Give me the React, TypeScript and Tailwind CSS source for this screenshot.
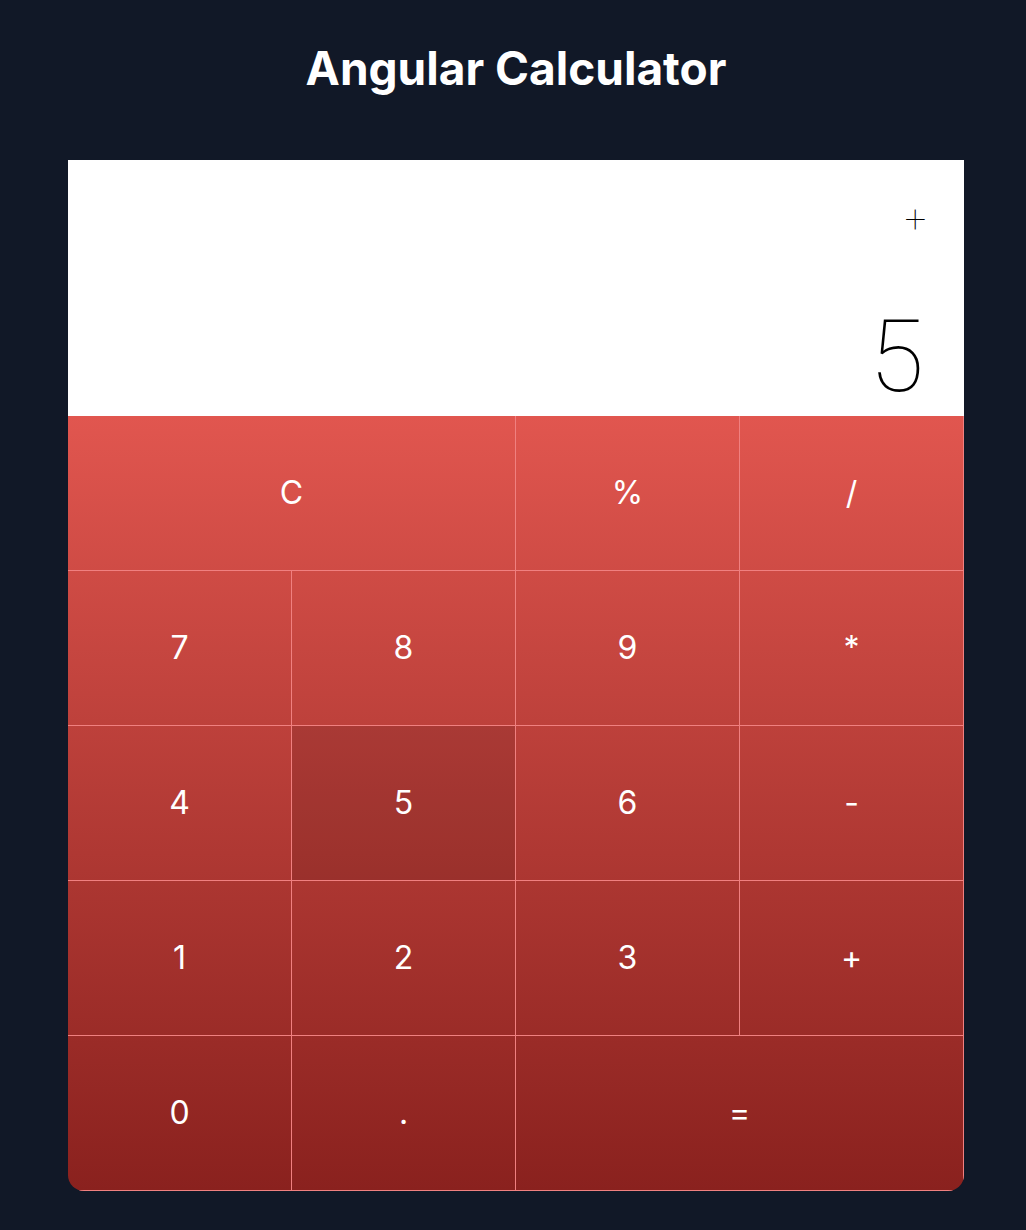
import React from "react";

type Key = { label: string; span?: number; pressed?: boolean };

const keys: Key[] = [
  { label: "C", span: 2 },
  { label: "%" },
  { label: "/" },
  { label: "7" },
  { label: "8" },
  { label: "9" },
  { label: "*" },
  { label: "4" },
  { label: "5", pressed: true },
  { label: "6" },
  { label: "-" },
  { label: "1" },
  { label: "2" },
  { label: "3" },
  { label: "+" },
  { label: "0" },
  { label: "." },
  { label: "=", span: 2 },
];

export default function App() {
  return (
    <div className="min-h-[1230px] w-full bg-[#111827] pt-[45px] pl-[6px]" style={{ fontFamily: "Inter, 'Noto Sans', sans-serif" }}>
      <h1 className="text-center text-[46px] font-bold leading-none text-white">Angular Calculator</h1>
      <div className="mx-auto mt-[69px] w-[896px] overflow-hidden rounded-b-2xl">
        <div className="flex h-[256px] flex-col items-end justify-between bg-white pr-[40px] pt-[40px] pb-[9px]">
          <div className="mr-[-2px] text-[38px] font-thin leading-none text-black" style={{ fontFamily: "Roboto, sans-serif" }}>+</div>
          <div className="text-[100px] font-thin leading-none text-black" style={{ fontFamily: "Roboto, sans-serif" }}>5</div>
        </div>
        <div className="grid grid-cols-4 bg-gradient-to-b from-[#e1564f] to-[#8a211e]">
          {keys.map((k, i) => (
            <button
              key={i}
              className={`flex h-[155px] items-center justify-center border-r border-b border-[#f08080] text-[32px] font-normal text-white ${k.span === 2 ? "col-span-2" : ""} ${k.pressed ? "bg-black/10" : ""}`}
            >
              {k.label}
            </button>
          ))}
        </div>
      </div>
    </div>
  );
}
